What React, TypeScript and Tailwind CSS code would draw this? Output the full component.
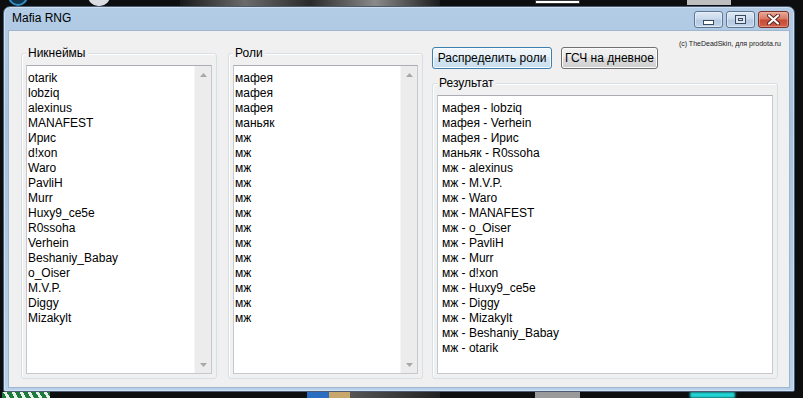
import React from "react";

const names = [
  "otarik", "lobziq", "alexinus", "MANAFEST", "Ирис", "d!xon", "Waro", "PavliH", "Murr",
  "Huxy9_ce5e", "R0ssoha", "Verhein", "Beshaniy_Babay", "o_Oiser", "M.V.P.", "Diggy", "Mizakylt",
];

const roles = [
  "мафея", "мафея", "мафея", "маньяк",
  "мж", "мж", "мж", "мж", "мж", "мж", "мж", "мж", "мж", "мж", "мж", "мж", "мж",
];

const results = [
  "мафея - lobziq", "мафея - Verhein", "мафея - Ирис", "маньяк - R0ssoha", "мж - alexinus",
  "мж - M.V.P.", "мж - Waro", "мж - MANAFEST", "мж - o_Oiser", "мж - PavliH", "мж - Murr",
  "мж - d!xon", "мж - Huxy9_ce5e", "мж - Diggy", "мж - Mizakylt", "мж - Beshaniy_Babay", "мж - otarik",
];

function GroupBox({ label, className, children }: { label: string; className?: string; children: React.ReactNode }) {
  return (
    <div className={`relative flex flex-col rounded-[3px] border border-[#d5dfe5] shadow-[inset_1px_1px_0_#fff] px-[4px] pb-[4px] pt-[11px] ${className ?? ""}`}>
      {/* groupbox caption sits on the border */}
      <span className="absolute -top-[9px] left-[4px] bg-[#f0f0f0] px-[2px] text-[12px] leading-[16px] text-black">
        {label}
      </span>
      {children}
    </div>
  );
}

function ScrollArrow({ down }: { down?: boolean }) {
  return (
    <div className="h-[17px] flex items-center justify-center">
      <svg width="7" height="4" viewBox="0 0 7 4">
        {down ? <path d="M0 0h7L3.5 4z" fill="#a8a8a8" /> : <path d="M0 4h7L3.5 0z" fill="#a8a8a8" />}
      </svg>
    </div>
  );
}

function ListBox({ items }: { items: string[] }) {
  return (
    <div className="flex-1 flex bg-white border border-[#c6c8cd] border-t-[#abadb3]">
      <div className="flex-1 pl-[1px] pt-[5px] text-[12px] leading-[15px] text-black">
        {items.map((t, i) => (
          <div key={i}>{t}</div>
        ))}
      </div>
      <div className="w-[17px] flex flex-col justify-between bg-[#ececec] border-l border-[#f6f6f6]">
        <ScrollArrow />
        <ScrollArrow down />
      </div>
    </div>
  );
}

function WinButton({ children, focused, className }: { children: React.ReactNode; focused?: boolean; className?: string }) {
  return (
    <button
      className={`h-[22px] rounded-[3px] border text-[12px] leading-none text-black whitespace-nowrap shadow-[inset_0_0_0_1px_#fbfbfb] ${
        focused
          ? "border-[#3c7fb1] bg-[linear-gradient(#f2f7fb_0%,#e8f1f8_45%,#d4e6f3_50%,#c9deee_100%)]"
          : "border-[#707070] bg-[linear-gradient(#f2f2f2_0%,#ebebeb_45%,#dddddd_50%,#cfcfcf_100%)]"
      } ${className ?? ""}`}
    >
      {children}
    </button>
  );
}

function CaptionButton({ kind }: { kind: "min" | "max" | "close" }) {
  if (kind === "close") {
    return (
      <div className="w-[31px] h-[17px] rounded-[3px] border border-[#7d3127] bg-[linear-gradient(#eaa897_0%,#d77a66_45%,#c84a34_55%,#d0624a_100%)] shadow-[inset_0_0_0_1px_#f0b9ab80] flex items-center justify-center">
        <svg width="13" height="11" viewBox="0 0 13 11">
          <path d="M2 1.5l9 8M11 1.5l-9 8" stroke="#5a2018" strokeWidth="4" strokeLinecap="round" />
          <path d="M2 1.5l9 8M11 1.5l-9 8" stroke="#fff" strokeWidth="2.2" strokeLinecap="round" />
        </svg>
      </div>
    );
  }
  return (
    <div className="w-[29px] h-[17px] rounded-[3px] border border-[#5f7692] bg-[linear-gradient(#dfe9f5_0%,#c9daec_45%,#b3c9e2_55%,#c2d5ea_100%)] shadow-[inset_0_0_0_1px_#eef4fa99] flex items-center justify-center">
      {kind === "min" ? (
        <div className="mt-[5px] w-[11px] h-[5px] bg-white border border-[#3b4a5d]" />
      ) : (
        <div className="w-[11px] h-[9px] border border-[#3b4a5d] bg-[#dce7f3] flex items-center justify-center">
          <div className="w-[5px] h-[3px] border border-[#3b4a5d]" />
        </div>
      )}
    </div>
  );
}

export default function App() {
  return (
    <div className="relative w-[803px] h-[398px] overflow-hidden bg-[#0d0e10] font-['Liberation_Sans',Arial,sans-serif]">
      {/* desktop wallpaper bits */}
      <div className="absolute left-[8px] -top-[14px] w-[20px] h-[20px] rounded-full border-2 border-[#2f8fc4] bg-[#12324a]" />
      <div className="absolute left-[88px] -top-[14px] w-[22px] h-[20px] rounded-full bg-[#d9dde2]" />
      <div className="absolute left-[180px] top-0 w-[260px] h-[6px] bg-[linear-gradient(90deg,#1a1a1a,#6b6b6b,#2a2a2a,#8a8a8a,#1c1c1c)]" />
      <div className="absolute left-[535px] top-0 w-[45px] h-[4px] bg-white border border-[#333]" />
      <div className="absolute left-[687px] top-0 w-[44px] h-[5px] bg-[#bfbfbf]" />
      <div className="absolute left-[2px] bottom-0 w-[48px] h-[6px] bg-[repeating-linear-gradient(60deg,#1d7a3a_0px,#1d7a3a_4px,#e8f0ea_4px,#e8f0ea_7px)]" />
      <div className="absolute left-[307px] bottom-0 w-[22px] h-[6px] bg-[#2a6cc0]" />
      <div className="absolute left-[329px] bottom-0 w-[22px] h-[6px] bg-[#c9a66b]" />
      <div className="absolute left-[350px] bottom-0 w-[90px] h-[6px] bg-[linear-gradient(90deg,#555,#222)]" />
      <div className="absolute left-[535px] bottom-0 w-[45px] h-[6px] bg-[#9a9a9a]" />
      <div className="absolute left-[690px] bottom-0 w-[45px] h-[6px] bg-[#22d4d4] blur-[1px]" />

      {/* window */}
      <div className="absolute left-[3px] top-[6px] w-[792px] h-[386px] flex flex-col rounded-t-[7px] rounded-b-[2px] border border-[#4a5d74] bg-[linear-gradient(#b3cce6_0%,#a7c2de_30%,#b9d1ea_100%)] shadow-[inset_0_0_0_1px_#dde9f5aa]">
        <div className="h-[23px] flex items-start justify-between pr-[5px]">
          <span className="pl-[8px] text-[12px] leading-[23px] text-black">Mafia RNG</span>
          <div className="mt-[4px] flex gap-[3px]">
            <CaptionButton kind="min" />
            <CaptionButton kind="max" />
            <CaptionButton kind="close" />
          </div>
        </div>

        <div className="flex-1 mx-[4px] mb-[3px] flex bg-[#f0f0f0] border border-[#9fb6cf] pl-[12px] pr-[11px] pb-[8px] text-black">
          <GroupBox label="Никнеймы" className="mt-[22px] w-[196px]">
            <ListBox items={names} />
          </GroupBox>
          <GroupBox label="Роли" className="mt-[22px] ml-[11px] w-[195px]">
            <ListBox items={roles} />
          </GroupBox>

          <div className="ml-[9px] flex-1 flex flex-col">
            <div className="h-[38px] flex items-start">
              <div className="mt-[16px] flex gap-[9px]">
                <WinButton focused className="w-[120px]">Распределить роли</WinButton>
                <WinButton className="w-[97px]">ГСЧ на дневное</WinButton>
              </div>
              <span className="ml-auto mt-[9px] mr-[-3px] text-[7px] leading-[8px] text-[#222]">
                (c) TheDeadSkin, для prodota.ru
              </span>
            </div>
            <GroupBox label="Результат" className="mt-[14px] flex-1">
              <div className="flex-1 bg-white border border-[#c6c8cd] border-t-[#abadb3] pl-[4px] pt-[5px] text-[12px] leading-[15px]">
                {results.map((t, i) => (
                  <div key={i}>{t}</div>
                ))}
              </div>
            </GroupBox>
          </div>
        </div>
      </div>
    </div>
  );
}
